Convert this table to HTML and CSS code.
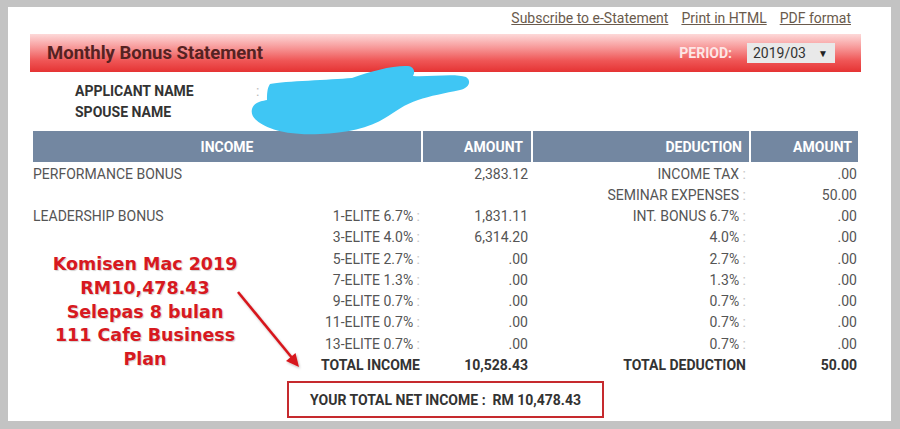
FILE: index.html
```html
<!DOCTYPE html>
<html>
<head>
<meta charset="utf-8">
<link rel="stylesheet" href="styles.css">
</head>
<body>
<div class="panel">
  <div class="links">
    <a href="#">Subscribe to e-Statement</a>
    <a href="#">Print in HTML</a>
    <a href="#">PDF format</a>
  </div>
  <div class="titlebar">
    <h1 class="title">Monthly Bonus Statement</h1>
    <span class="plabel">PERIOD:</span>
    <div class="select"><span>2019/03</span><span class="caret">&#9660;</span></div>
  </div>
  <div class="applicant">
    <div class="arow"><span class="alabel">APPLICANT NAME</span><span class="acolon">:</span></div>
    <div class="arow"><span class="alabel">SPOUSE NAME</span></div>
  </div>
  <div class="stmt">
    <div class="th th-income">INCOME</div>
    <div class="th th-amt">AMOUNT</div>
    <div class="th th-ded">DEDUCTION</div>
    <div class="th th-amt2">AMOUNT</div>

    <div class="td inc"><span>PERFORMANCE BONUS</span><span></span></div>
    <div class="td amt">2,383.12</div>
    <div class="td ded">INCOME TAX <i>:</i></div>
    <div class="td amt2">.00</div>

    <div class="td inc"><span></span><span></span></div>
    <div class="td amt"></div>
    <div class="td ded">SEMINAR EXPENSES <i>:</i></div>
    <div class="td amt2">50.00</div>

    <div class="td inc"><span>LEADERSHIP BONUS</span><span>1-ELITE 6.7% <i>:</i></span></div>
    <div class="td amt">1,831.11</div>
    <div class="td ded">INT. BONUS 6.7% <i>:</i></div>
    <div class="td amt2">.00</div>

    <div class="td inc"><span></span><span>3-ELITE 4.0% <i>:</i></span></div>
    <div class="td amt">6,314.20</div>
    <div class="td ded">4.0% <i>:</i></div>
    <div class="td amt2">.00</div>

    <div class="td inc"><span></span><span>5-ELITE 2.7% <i>:</i></span></div>
    <div class="td amt">.00</div>
    <div class="td ded">2.7% <i>:</i></div>
    <div class="td amt2">.00</div>

    <div class="td inc"><span></span><span>7-ELITE 1.3% <i>:</i></span></div>
    <div class="td amt">.00</div>
    <div class="td ded">1.3% <i>:</i></div>
    <div class="td amt2">.00</div>

    <div class="td inc"><span></span><span>9-ELITE 0.7% <i>:</i></span></div>
    <div class="td amt">.00</div>
    <div class="td ded">0.7% <i>:</i></div>
    <div class="td amt2">.00</div>

    <div class="td inc"><span></span><span>11-ELITE 0.7% <i>:</i></span></div>
    <div class="td amt">.00</div>
    <div class="td ded">0.7% <i>:</i></div>
    <div class="td amt2">.00</div>

    <div class="td inc"><span></span><span>13-ELITE 0.7% <i>:</i></span></div>
    <div class="td amt">.00</div>
    <div class="td ded">0.7% <i>:</i></div>
    <div class="td amt2">.00</div>

    <div class="td inc total"><span></span><span>TOTAL INCOME</span></div>
    <div class="td amt total">10,528.43</div>
    <div class="td ded total">TOTAL DEDUCTION</div>
    <div class="td amt2 total">50.00</div>
  </div>
  <div class="net">YOUR TOTAL NET INCOME :&nbsp; RM 10,478.43</div>

  <svg class="overlay" viewBox="8 7 883 414" width="883" height="414" aria-hidden="true">
    <defs>
      <filter id="sh" x="-20%" y="-20%" width="140%" height="140%">
        <feDropShadow dx="1" dy="1.5" stdDeviation="1" flood-color="#000" flood-opacity="0.25"/>
      </filter>
    </defs>
    <path class="scribble" d="M270 84 C285 81 330 80 352 78 C370 71 395 65 408 66 C415 67 415 73 413 76 C430 77 455 73 466 77 C472 81 469 88 460 90 C445 93 430 96 418 100 C405 104 395 112 385 118 C370 128 345 133 320 134 C300 135 282 133 270 128 C258 123 250 117 252 109 C254 102 262 101 267 100 C267 95 267 88 270 84 Z"/>
    <g filter="url(#sh)">
      <line x1="238" y1="292" x2="293" y2="359" stroke="#d7191f" stroke-width="2.6"/>
      <polygon points="299,367 286,361 295.5,353" fill="#d7191f"/>
    </g>
  </svg>

  <div class="note">Komisen Mac 2019<br>RM10,478.43<br>Selepas 8 bulan<br>111 Cafe Business<br>Plan</div>
</div>
</body>
</html>
```
FILE: styles.css
```css
html, body {
  margin: 0;
  padding: 0;
}
body {
  background: #c3c3c3;
  font-family: Roboto, "Liberation Sans", sans-serif;
  width: 900px;
  height: 429px;
  overflow: hidden;
}
.panel {
  position: relative;
  margin: 7px 0 0 8px;
  width: 883px;
  height: 414px;
  background: #ffffff;
}
.links {
  display: flex;
  justify-content: flex-end;
  align-items: center;
  gap: 13px;
  height: 22px;
  padding-right: 40px;
  font-size: 14px;
}
.links a {
  color: #6a5a4c;
  text-decoration: underline;
}
.titlebar {
  margin: 5px 30px 0 22px;
  height: 38px;
  display: flex;
  align-items: center;
  padding: 0 26px 0 17px;
  background: linear-gradient(to bottom, #fdd9d9 0%, #f79a9a 35%, #ef5656 70%, #e53333 100%);
}
.title {
  flex: 1;
  margin: 0;
  font-size: 18.5px;
  font-weight: 700;
  color: #552222;
}
.plabel {
  color: #fde6e6;
  font-weight: 700;
  font-size: 14px;
  margin-right: 15px;
}
.select {
  box-sizing: border-box;
  width: 88px;
  height: 20px;
  display: flex;
  align-items: center;
  justify-content: space-between;
  padding: 0 7px 0 6px;
  background: #e9e9e9;
  font-size: 14px;
  color: #333;
}
.caret {
  font-size: 10px;
  color: #222;
}
.applicant {
  margin-top: 8px;
  padding-left: 67px;
  font-size: 14px;
  font-weight: 700;
  color: #333;
}
.arow {
  display: flex;
  align-items: center;
  height: 21px;
}
.alabel {
  width: 181px;
}
.acolon {
  color: #bbb;
  font-weight: 400;
}
.stmt {
  margin: 9px 33px 0 25px;
  display: grid;
  grid-template-columns: 388px 108px 216px 107px;
  column-gap: 2px;
}
.th {
  height: 31px;
  margin-bottom: 1.5px;
  display: flex;
  align-items: center;
  background: #7387a1;
  color: #fff;
  font-weight: 700;
  font-size: 14px;
}
.th-income { justify-content: center; }
.th-amt { justify-content: flex-end; padding-right: 8px; }
.th-ded { justify-content: flex-end; padding-right: 7px; }
.th-amt2 { justify-content: flex-end; padding-right: 6px; }
.td {
  height: 21.25px;
  line-height: 21.25px;
  font-size: 14px;
  color: #555;
  white-space: nowrap;
}
.td i {
  font-style: normal;
  color: #c4c4c4;
}
.inc {
  display: flex;
  justify-content: space-between;
  padding-right: 1px;
}
.amt { text-align: right; padding-right: 3px; }
.ded { text-align: right; padding-right: 3px; }
.amt2 { text-align: right; padding-right: 1px; }
.total {
  font-weight: 700;
  color: #333;
}
.net {
  box-sizing: border-box;
  margin: 5px 0 0 279px;
  width: 317px;
  height: 37px;
  border: 2px solid #c62a2e;
  display: flex;
  align-items: center;
  justify-content: center;
  font-size: 14px;
  font-weight: 700;
  color: #333;
}
.overlay {
  position: absolute;
  left: 0;
  top: 0;
  pointer-events: none;
}
.scribble {
  fill: #3fc6f4;
}
.note {
  position: absolute;
  left: 37px;
  top: 246px;
  width: 200px;
  text-align: center;
  font-family: "DejaVu Sans", sans-serif;
  font-weight: 700;
  font-size: 17.5px;
  line-height: 23.8px;
  color: #d7191f;
  text-shadow: 1px 1px 1px rgba(0, 0, 0, 0.18);
}
```
